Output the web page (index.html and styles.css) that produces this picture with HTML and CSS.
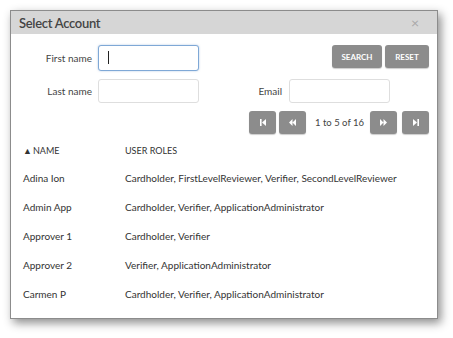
FILE: index.html
```html
<!DOCTYPE html>
<html lang="en">
<head>
    <meta charset="UTF-8">
    <title>Select Account</title>
    <link rel="stylesheet" href="styles.css">
</head>
<body>
    <div class="dialog">
        <div class="dialog-header">
            <span class="dialog-title">Select Account</span>
            <span class="dialog-close">&times;</span>
        </div>

        <div class="filters">
            <div class="filter-row">
                <label class="field-label">First name</label>
                <span class="caret-wrap"><input type="text" class="field-input focused"></span>
                <div class="spacer"></div>
                <div class="btn-group">
                    <button class="btn btn-search">SEARCH</button>
                    <button class="btn btn-reset">RESET</button>
                </div>
            </div>
            <div class="filter-row">
                <label class="field-label">Last name</label>
                <input type="text" class="field-input">
                <div class="spacer"></div>
                <label class="email-label">Email</label>
                <input type="text" class="field-input email-input">
            </div>
            <div class="pager">
                <button class="btn pager-btn">
                    <svg width="6" height="7" viewBox="0 0 6 7"><rect x="0" y="0" width="1.6" height="7" fill="#fff"/><path d="M6 0 L2 3.5 L6 7 Z" fill="#fff"/></svg>
                </button>
                <button class="btn pager-btn">
                    <svg width="7" height="7" viewBox="0 0 7 7"><path d="M3.5 0 L0 3.5 L3.5 7 Z M7 0 L3.5 3.5 L7 7 Z" fill="#fff"/></svg>
                </button>
                <span class="pager-text">1 to 5 of 16</span>
                <button class="btn pager-btn pager-next">
                    <svg width="7" height="7" viewBox="0 0 7 7"><path d="M0 0 L3.5 3.5 L0 7 Z M3.5 0 L7 3.5 L3.5 7 Z" fill="#fff"/></svg>
                </button>
                <button class="btn pager-btn">
                    <svg width="6" height="7" viewBox="0 0 6 7"><path d="M0 0 L4 3.5 L0 7 Z" fill="#fff"/><rect x="4.4" y="0" width="1.6" height="7" fill="#fff"/></svg>
                </button>
            </div>
        </div>

        <table class="accounts">
            <thead>
                <tr>
                    <th class="col-name"><span class="sort-arrow">&#9650;</span>NAME</th>
                    <th>USER ROLES</th>
                </tr>
            </thead>
            <tbody>
                <tr><td class="col-name">Adina Ion</td><td>Cardholder, FirstLevelReviewer, Verifier, SecondLevelReviewer</td></tr>
                <tr><td class="col-name">Admin App</td><td>Cardholder, Verifier, ApplicationAdministrator</td></tr>
                <tr><td class="col-name">Approver 1</td><td>Cardholder, Verifier</td></tr>
                <tr><td class="col-name">Approver 2</td><td>Verifier, ApplicationAdministrator</td></tr>
                <tr><td class="col-name">Carmen P</td><td>Cardholder, Verifier, ApplicationAdministrator</td></tr>
            </tbody>
        </table>
    </div>
</body>
</html>
```

FILE: styles.css
```css
html, body {
    height: 100%;
}

body {
    margin: 0;
    padding: 10px 0 0 10px;
    box-sizing: border-box;
    background: #fff;
    font-family: 'Lato', 'Open Sans', sans-serif;
    color: #333;
}

/* Dialog box */
.dialog {
    width: 426px;
    height: 307px;
    border: 1px solid #8c8c8c;
    background: #fff;
    box-shadow: 3px 4px 9px rgba(0, 0, 0, 0.45);
}

.dialog-header {
    display: flex;
    align-items: center;
    justify-content: space-between;
    height: 23px;
    padding: 0 18px 0 8px;
    background: #d6d6d6;
}

.dialog-title {
    font-size: 13px;
    font-weight: 600;
    letter-spacing: -0.3px;
    color: #444;
}

.dialog-close {
    font-size: 14px;
    color: #a8a8a8;
}

/* Filter form */
.filters {
    padding: 11px 8px 0 0;
}

.filter-row {
    display: flex;
    align-items: center;
    gap: 6px;
    margin-bottom: 8px;
}

.spacer {
    flex: 1;
}

.field-label {
    width: 81px;
    text-align: right;
    font-size: 10px;
    color: #444;
}

.email-label {
    font-size: 10px;
    color: #444;
    margin-right: 1px;
}

.field-input {
    width: 101px;
    height: 24px;
    box-sizing: border-box;
    border: 1px solid #dedede;
    border-radius: 3px;
    padding: 0 8px;
    margin: 0;
    outline: none;
}

.field-input.focused {
    height: 26px;
    border-color: #7fa8d6;
    box-shadow: 0 0 2px rgba(90, 140, 200, 0.5);
}

.email-input {
    margin-right: 39px;
}

.caret-wrap {
    position: relative;
    display: inline-block;
    height: 26px;
}

.caret-wrap::after {
    content: '';
    position: absolute;
    left: 10px;
    top: 6px;
    width: 1px;
    height: 13px;
    background: #222;
}

/* Buttons */
.btn {
    height: 23px;
    border: none;
    border-radius: 3px;
    background: #8c8c8c;
    color: #fff;
    font-family: 'Lato', 'Open Sans', sans-serif;
    font-size: 8px;
    font-weight: 700;
    padding: 0;
    margin: 0;
    box-shadow: 0 1px 1px rgba(0, 0, 0, 0.2);
}

.btn-group {
    display: flex;
    gap: 3px;
    align-self: flex-start;
}

.btn-search {
    width: 50px;
}

.btn-reset {
    width: 44px;
}

.pager {
    display: flex;
    justify-content: flex-end;
    align-items: center;
    gap: 3px;
}

.pager-btn {
    width: 27px;
    display: flex;
    align-items: center;
    justify-content: center;
}

.pager-next {
    margin-right: 2px;
}

.pager-text {
    font-size: 9.5px;
    color: #444;
    margin: 0 3px 0 6px;
}

/* Accounts table */
.accounts {
    margin-top: 3px;
    border-collapse: collapse;
    font-size: 10px;
    color: #333;
}

.accounts th {
    text-align: left;
    font-weight: 400;
    font-size: 9px;
    height: 26px;
    padding: 0;
}

.accounts td {
    height: 29px;
    padding: 0;
}

.col-name {
    width: 102px;
    padding-left: 12px !important;
}

.sort-arrow {
    font-size: 9px;
    margin-right: 1px;
}
```
